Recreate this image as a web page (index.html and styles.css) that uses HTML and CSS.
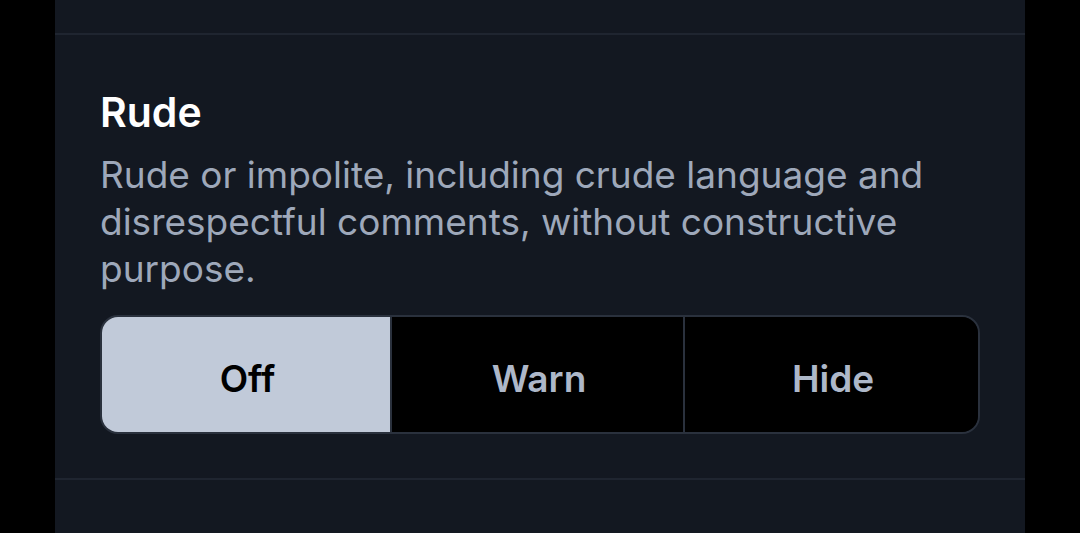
FILE: index.html
```html
<!DOCTYPE html>
<html>
<head>
<meta charset="utf-8">
<link rel="stylesheet" href="styles.css">
</head>
<body>
<div class="panel">
  <div class="section">
    <div class="title">Rude</div>
    <div class="desc">Rude or impolite, including crude language and disrespectful comments, without constructive purpose.</div>
    <div class="seg">
      <div class="opt active">Off</div>
      <div class="opt">Warn</div>
      <div class="opt">Hide</div>
    </div>
  </div>
</div>
</body>
</html>
```

FILE: styles.css
```css
html, body {
  margin: 0;
  padding: 0;
  background: #000;
  height: 100%;
  overflow: hidden;
}
body {
  font-family: Inter, "Noto Sans", sans-serif;
}
.panel {
  margin-left: 55px;
  width: 970px;
  height: 533px;
  background: #131821;
  padding-top: 33px;
  box-sizing: border-box;
}
.section {
  border-top: 2px solid #1f2530;
  border-bottom: 2px solid #1f2530;
  padding: 52px 45px 44px 45px;
}
.title {
  color: #ffffff;
  font-weight: 600;
  font-size: 41px;
  line-height: 50px;
}
.desc {
  color: #9ea8ba;
  font-size: 37px;
  line-height: 47px;
  margin-top: 14px;
  width: 880px;
}
.seg {
  display: grid;
  grid-template-columns: 288px 293px 1fr;
  margin-top: 23px;
  height: 119px;
  border: 2px solid #2a313d;
  border-radius: 18px;
  overflow: hidden;
  box-sizing: border-box;
  width: 880px;
}
.opt {
  display: flex;
  align-items: center;
  justify-content: center;
  background: #000;
  color: #aeb8c9;
  font-weight: 600;
  font-size: 37px;
  padding-top: 8px;
  padding-left: 3px;
  box-sizing: border-box;
}
.opt + .opt {
  border-left: 2px solid #2a313d;
}
.opt.active {
  background: #c1cad9;
  color: #000;
}
```
